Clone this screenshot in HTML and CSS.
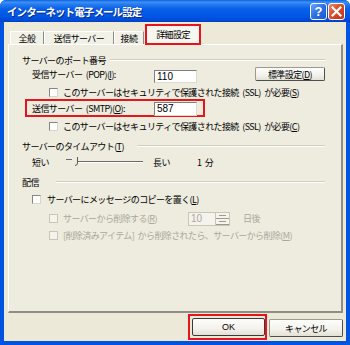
FILE: index.html
```html
<!DOCTYPE html>
<html lang="ja">
<head>
    <meta charset="UTF-8">
    <title>インターネット電子メール設定</title>
    <link rel="stylesheet" href="styles.css">
</head>
<body>
    <div class="window">
        <div class="titlebar">
            <span class="title">インターネット電子メール設定</span>
            <div class="caption-btns">
                <span class="cap-btn help">?</span>
                <span class="cap-btn close">
                    <svg width="11" height="11" viewBox="0 0 11 11"><path d="M1.5 1.5 L9.5 9.5 M9.5 1.5 L1.5 9.5" stroke="#fff" stroke-width="2.2" stroke-linecap="square"/></svg>
                </span>
            </div>
        </div>

        <div class="client">
            <div class="tabs">
                <span class="tab t1">全般</span>
                <span class="tab t2">送信サーバー</span>
                <span class="tab t3">接続</span>
                <span class="mark tab-mark"><span class="tab active">詳細設定</span></span>
            </div>

            <div class="panel">
                <div class="group g1"><span class="gtext">サーバーのポート番号</span><i class="rule"></i></div>

                <div class="row pop">
                    <span class="lbl">受信サーバー (POP)(<u>I</u>):</span>
                    <span class="field">110</span>
                    <span class="btn std">標準設定(<u>D</u>)</span>
                </div>

                <div class="row check sub cb1">
                    <span class="box"></span>
                    <span>このサーバーはセキュリティで保護された接続 (SSL) が必要(<u>S</u>)</span>
                </div>

                <div class="mark smtp">
                    <span class="lbl">送信サーバー (SMTP)(<u>O</u>):</span>
                    <span class="field">587</span>
                </div>

                <div class="row check sub cb2">
                    <span class="box"></span>
                    <span>このサーバーはセキュリティで保護された接続 (SSL) が必要(<u>C</u>)</span>
                </div>

                <div class="group g2"><span class="gtext">サーバーのタイムアウト(<u>T</u>)</span><i class="rule"></i></div>

                <div class="row slider-row">
                    <span class="short">短い</span>
                    <svg class="slider" width="80" height="10" viewBox="0 0 80 10">
                        <path d="M1 2.5 H7" stroke="#6b6b6b" stroke-width="1"/>
                        <path d="M13 4.5 H78" stroke="#6b6b6b" stroke-width="1"/>
                        <path d="M13 5.5 H78" stroke="#ffffff" stroke-width="1"/>
                        <path d="M12.5 0 V6 Q12.5 8.5 10 8.5" stroke="#5a5a5a" stroke-width="1" fill="none"/>
                    </svg>
                    <span class="long">長い</span>
                    <span>1 分</span>
                </div>

                <div class="group g3"><span class="gtext">配信</span><i class="rule"></i></div>

                <div class="row check cb3">
                    <span class="box"></span>
                    <span>サーバーにメッセージのコピーを置く(<u>L</u>)</span>
                </div>

                <div class="row check sub disabled dis1">
                    <span class="box"></span>
                    <span class="del-text">サーバーから削除する(<u>R</u>)</span>
                    <span class="spin">
                        <span class="spin-val">10</span>
                        <span class="spin-btns"><i></i><i></i></span>
                    </span>
                    <span class="days">日後</span>
                </div>

                <div class="row check sub disabled dis2">
                    <span class="box"></span>
                    <span>[削除済みアイテム] から削除されたら、サーバーから削除(<u>M</u>)</span>
                </div>
            </div>

            <div class="actions">
                <span class="mark ok-mark"><span class="btn ok">OK</span></span>
                <span class="btn cancel">キャンセル</span>
            </div>
        </div>
    </div>
</body>
</html>
```

FILE: styles.css
```css
body {
    margin: 0;
    font-family: "Noto Sans CJK JP", "DejaVu Sans", sans-serif;
    font-size: 9px;
    letter-spacing: -0.6px;
    word-spacing: 2px;
    color: #000;
}

u {
    text-decoration: underline;
    text-underline-offset: 1px;
}

.window {
    width: 350px;
    height: 345px;
    display: flex;
    flex-direction: column;
    background: #0053e1;
    border-radius: 6px 6px 0 0;
    overflow: hidden;
}

/* title bar */
.titlebar {
    height: 22px;
    flex: none;
    display: flex;
    align-items: center;
    padding: 0 5px 0 7px;
    background: linear-gradient(to bottom, #0a62df 0%, #3d91f5 10%, #2b7ef0 18%, #0760e8 40%, #0056e4 75%, #004ad6 92%, #003fbf 100%);
}

.title {
    color: #fff;
    font-weight: bold;
    font-size: 10.5px;
    letter-spacing: -0.9px;
    text-shadow: 1px 1px 0 #0a2a8a;
    flex: 1;
}

.caption-btns {
    display: flex;
    gap: 1px;
}

.cap-btn {
    width: 15px;
    height: 15px;
    border: 1px solid #fff;
    border-radius: 3px;
    display: flex;
    align-items: center;
    justify-content: center;
    color: #fff;
    font-weight: bold;
    font-family: "Liberation Sans", sans-serif;
    font-size: 13px;
    letter-spacing: 0;
}

.help {
    background: linear-gradient(135deg, #6aa6ff 0%, #2d6fe6 50%, #1d56d0 100%);
}

.close {
    background: linear-gradient(135deg, #f08a6b 0%, #dd4a25 45%, #c53415 100%);
}

/* client area */
.client {
    flex: 1;
    margin: 0 4px 4px;
    background: #ece9d8;
    display: flex;
    flex-direction: column;
}

.mark {
    border: 2px solid #e8141c;
    box-sizing: border-box;
}

.tabs {
    height: 23px;
    flex: none;
    display: flex;
    align-items: flex-end;
    padding-left: 6px;
    margin-bottom: -1px;
}

.tab {
    height: 14px;
    line-height: 14px;
    text-align: center;
    box-sizing: border-box;
    background: #f2f1e8;
    border-top: 1px solid #fff;
    border-left: 1px solid #fff;
    border-right: 1px solid #8c8c80;
}

.t1 { width: 34px; }
.t2 { width: 70px; }
.t3 { width: 30px; margin-right: 1px; }

.tab-mark {
    width: 56px;
    height: 21px;
    position: relative;
    z-index: 1;
    display: flex;
}

.tab.active {
    width: 100%;
    height: 17px;
    line-height: 17px;
    background: #f7f6f0;
    border: none;
}

.panel {
    height: 269px;
    flex: none;
    margin-left: 4px;
    width: 335px;
    box-sizing: border-box;
    background: #eeecdf;
    border-top: 1px solid #fff;
    border-left: 1px solid #fff;
    border-right: 2px solid #8e8d86;
    border-bottom: 2px solid #8e8d86;
    padding: 8px 16px 0 13px;
    display: flex;
    flex-direction: column;
}

/* group headers */
.group {
    height: 14px;
    display: flex;
    align-items: center;
}

.gtext {
    flex: none;
}

.g1 .gtext { width: 88px; }
.g2 .gtext { width: 115px; }
.g3 .gtext { width: 34px; }

.rule {
    flex: 1;
    height: 0;
    border-top: 1px solid #d0cebf;
    border-bottom: 1px solid #fff;
}

.g2 { margin-top: 6px; }
.g3 { margin-top: 6px; }

/* rows */
.row {
    display: flex;
    align-items: center;
    height: 14px;
    padding-left: 10px;
}

.lbl {
    width: 122px;
    flex: none;
}

.field {
    width: 43px;
    box-sizing: border-box;
    background: #fff;
    border-top: 1px solid #7f7f7f;
    border-left: 1px solid #7f7f7f;
    border-right: 1px solid #dedbcc;
    border-bottom: 1px solid #dedbcc;
    padding-left: 2px;
    font-family: "Liberation Sans", sans-serif;
    font-size: 10px;
    letter-spacing: 0;
}

.pop {
    height: 16px;
    align-items: flex-start;
}

.pop .lbl {
    line-height: 16px;
}

.pop .field {
    height: 13px;
    line-height: 11px;
    margin-top: 3px;
}

.btn {
    display: flex;
    align-items: center;
    justify-content: center;
    box-sizing: border-box;
    background: linear-gradient(to bottom, #fdfdfb 0%, #f3f2ec 60%, #e3e0d5 100%);
    border: 1px solid #9a9a92;
    border-right-color: #4d4d4d;
    border-bottom-color: #4d4d4d;
    border-radius: 2px;
}

.std {
    margin-left: auto;
    width: 70px;
    height: 14px;
}

.check .box {
    width: 9px;
    height: 9px;
    flex: none;
    box-sizing: border-box;
    background: #fff;
    border-top: 1px solid #868686;
    border-left: 1px solid #868686;
    border-right: 1px solid #d9d6c8;
    border-bottom: 1px solid #d9d6c8;
    margin-right: 5px;
}

.sub {
    padding-left: 27px;
}

.cb1 { margin-top: 2px; }
.cb2 { margin-top: 2px; }

.smtp {
    width: 180px;
    height: 18px;
    margin-left: 3px;
    padding-left: 5px;
    display: flex;
    align-items: center;
}

.smtp .field {
    height: 14px;
    line-height: 12px;
    margin-top: 1px;
}

.slider-row {
    margin-top: 2px;
}

.short {
    width: 33px;
    flex: none;
}

.slider {
    margin-right: 8px;
}

.long {
    width: 44px;
    flex: none;
}

.cb3 {
    margin-top: 3px;
}

.cb3 .box {
    margin-right: 6px;
}

.disabled {
    color: #aca899;
}

.disabled .box {
    background: #f4f3ee;
    border-color: #c9c6b6;
}

.dis1 {
    height: 16px;
    margin-top: 4px;
}

.dis2 {
    margin-top: 2px;
}

.del-text {
    width: 125px;
    flex: none;
}

.spin {
    width: 42px;
    height: 14px;
    box-sizing: border-box;
    display: flex;
    border: 1px solid #c9c6b6;
    background: #f4f3ee;
    margin-top: 2px;
}

.spin-val {
    flex: 1;
    padding-left: 2px;
    line-height: 12px;
    font-family: "Liberation Sans", sans-serif;
    font-size: 10px;
    letter-spacing: 0;
}

.spin-btns {
    width: 13px;
    display: flex;
    flex-direction: column;
    border-left: 1px solid #c9c6b6;
}

.spin-btns i {
    flex: 1;
    border-bottom: 1px solid #9d9a8c;
    background: linear-gradient(#9d9a8c, #9d9a8c) center / 7px 1px no-repeat;
}

.days {
    margin-left: 13px;
}

/* bottom buttons */
.actions {
    display: flex;
    justify-content: flex-end;
    align-items: flex-start;
    padding-right: 3px;
    margin-top: 1px;
}

.ok-mark {
    width: 79px;
    height: 26px;
    padding: 2px 0 0 2px;
    margin-right: 2px;
}

.ok {
    width: 73px;
    height: 18px;
    border: 1px solid #3a3a3a;
    font-family: "Liberation Sans", sans-serif;
    letter-spacing: 0;
}

.cancel {
    width: 74px;
    height: 18px;
    margin-top: 5px;
}
```
